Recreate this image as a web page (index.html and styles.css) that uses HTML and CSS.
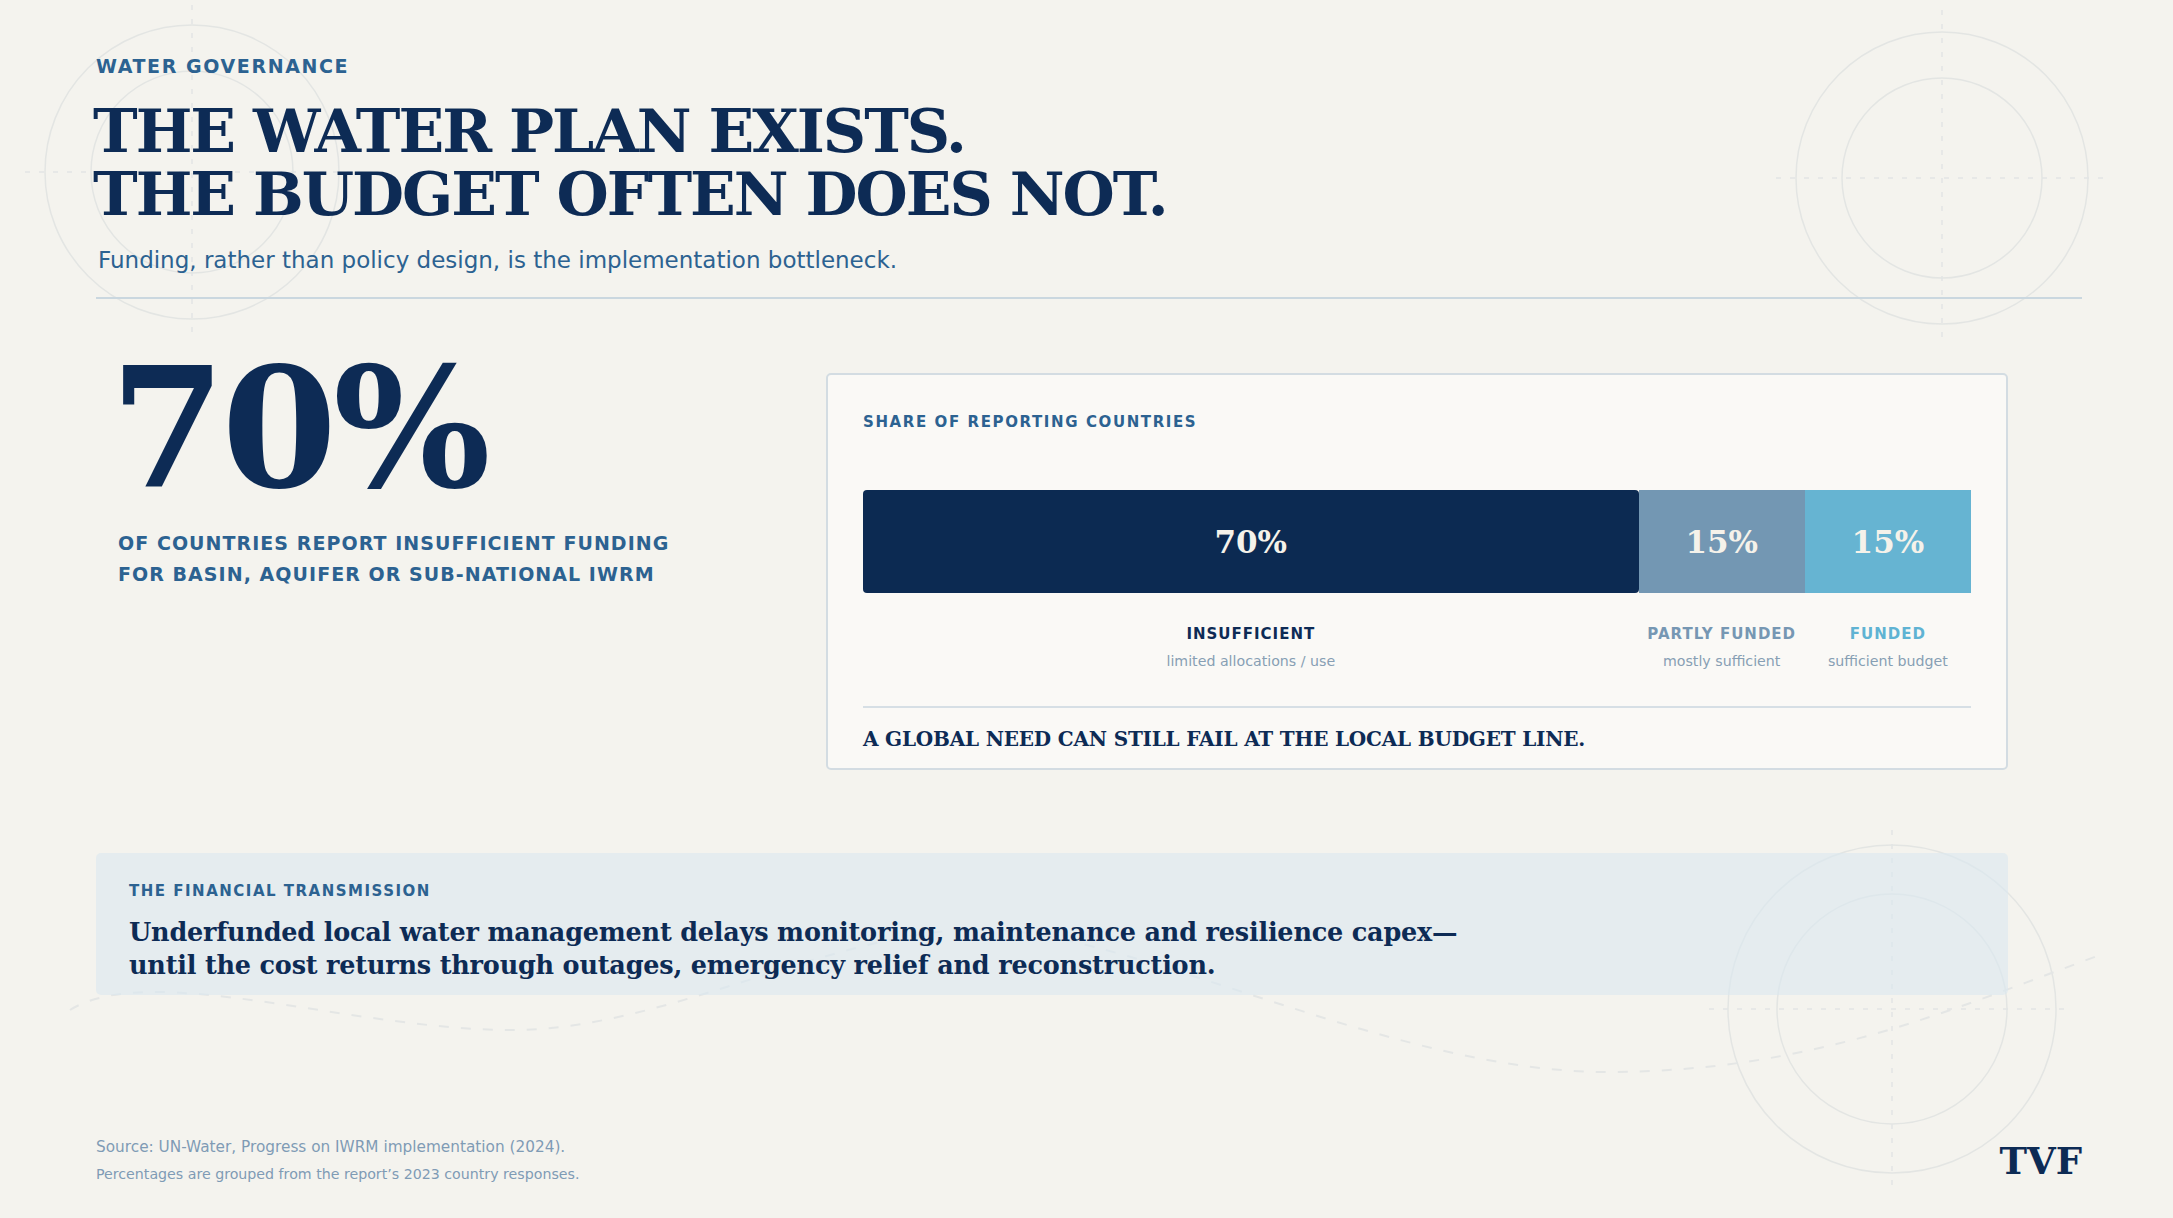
FILE: index.html
```html
<!DOCTYPE html>
<html lang="en">
<head>
<meta charset="utf-8">
<title>Water Governance</title>
<link rel="stylesheet" href="styles.css">
</head>
<body>
<div class="page">
  <svg class="deco" width="2173" height="1218" viewBox="0 0 2173 1218" aria-hidden="true">
    <g fill="none" stroke="#e3e5e3" stroke-width="1.5">
      <circle cx="192" cy="172" r="147"/>
      <circle cx="192" cy="172" r="101"/>
      <circle cx="1942" cy="178" r="146"/>
      <circle cx="1942" cy="178" r="100"/>
      <circle cx="1892" cy="1009" r="164"/>
      <circle cx="1892" cy="1009" r="115"/>
    </g>
    <g stroke="#e2e5e5" stroke-width="1.5" stroke-dasharray="5 9">
      <line x1="25" y1="172" x2="360" y2="172"/>
      <line x1="192" y1="5" x2="192" y2="340"/>
      <line x1="1776" y1="178" x2="2107" y2="178"/>
      <line x1="1942" y1="10" x2="1942" y2="345"/>
      <line x1="1709" y1="1009" x2="2070" y2="1009"/>
      <line x1="1892" y1="830" x2="1892" y2="1190"/>
    </g>
    <path d="M70,1010 C150,960 350,1030 512,1030 S850,920 1000,930 S1400,1072 1606,1072 S1950,1010 2100,955" fill="none" stroke="#e4e6e5" stroke-width="2" stroke-dasharray="10 12"/>
  </svg>

  <header class="head">
    <div class="eyebrow">WATER GOVERNANCE</div>
    <h1 class="title"><span class="title-line">THE WATER PLAN EXISTS.</span><span class="title-line">THE BUDGET OFTEN DOES NOT.</span></h1>
    <p class="subtitle">Funding, rather than policy design, is the implementation bottleneck.</p>
  </header>

  <div class="rule"></div>

  <section class="main">
    <div class="stat">
      <div class="stat-num">70%</div>
      <p class="stat-cap">OF COUNTRIES REPORT INSUFFICIENT FUNDING<br>FOR BASIN, AQUIFER OR SUB-NATIONAL IWRM</p>
    </div>

    <div class="card">
      <div class="card-label">SHARE OF REPORTING COUNTRIES</div>
      <div class="bar">
        <div class="seg seg-insuf" style="flex-basis:70%">70%</div>
        <div class="seg seg-partly" style="flex-basis:15%">15%</div>
        <div class="seg seg-funded" style="flex-basis:15%">15%</div>
      </div>
      <div class="legend">
        <div class="leg" style="flex-basis:70%">
          <div class="leg-title leg-insuf">INSUFFICIENT</div>
          <div class="leg-sub">limited allocations / use</div>
        </div>
        <div class="leg" style="flex-basis:15%">
          <div class="leg-title leg-partly">PARTLY FUNDED</div>
          <div class="leg-sub">mostly sufficient</div>
        </div>
        <div class="leg" style="flex-basis:15%">
          <div class="leg-title leg-funded">FUNDED</div>
          <div class="leg-sub">sufficient budget</div>
        </div>
      </div>
      <div class="card-rule"></div>
      <p class="card-note">A GLOBAL NEED CAN STILL FAIL AT THE LOCAL BUDGET LINE.</p>
    </div>
  </section>

  <section class="transmission">
    <div class="trans-label">THE FINANCIAL TRANSMISSION</div>
    <p class="trans-text">Underfunded local water management delays monitoring, maintenance and resilience capex—<br>until the cost returns through outages, emergency relief and reconstruction.</p>
  </section>

  <footer class="foot">
    <div class="sources">
      <p class="source">Source: UN-Water, Progress on IWRM implementation (2024).</p>
      <p class="note">Percentages are grouped from the report’s 2023 country responses.</p>
    </div>
    <div class="logo">TVF</div>
  </footer>
</div>
</body>
</html>
```

FILE: styles.css
```css
* { box-sizing: border-box; }

html, body {
  margin: 0;
  padding: 0;
  background: #f4f3ee;
}

.page {
  position: relative;
  width: 2173px;
  height: 1218px;
  overflow: hidden;
  display: flex;
  flex-direction: column;
  padding: 54px 91px 34px 96px;
  font-family: "DejaVu Sans", "Noto Sans", sans-serif;
  color: #0d2b55;
}

.deco {
  position: absolute;
  left: 0;
  top: 0;
  z-index: 0;
  pointer-events: none;
}

.head, .rule, .main, .transmission, .foot {
  position: relative;
  z-index: 1;
}

.eyebrow {
  font-size: 19px;
  line-height: 24px;
  font-weight: bold;
  letter-spacing: 1.6px;
  color: #2c6291;
}

.title {
  margin: 22px 0 0 -3px;
  font-family: "DejaVu Serif", "Liberation Serif", serif;
  font-size: 60px;
  font-weight: bold;
  letter-spacing: -2px;
  color: #0d2b55;
}

.title-line {
  display: block;
  height: 63px;
  line-height: 63px;
}

.subtitle {
  margin: 20px 0 0 2px;
  font-size: 23px;
  line-height: 28px;
  color: #2c6291;
}

.rule {
  margin-top: 23px;
  height: 2px;
  background: #cad7df;
}

.main {
  display: flex;
  align-items: flex-start;
  margin-top: 47px;
  margin-right: 74px;
}

.stat {
  width: 730px;
  flex: none;
  padding-left: 22px;
}

.stat-num {
  font-family: "DejaVu Serif", "Liberation Serif", serif;
  font-size: 166px;
  line-height: 166px;
  font-weight: bold;
  letter-spacing: -4px;
  margin-left: -8px;
  color: #0d2b55;
}

.stat-cap {
  margin: 16px 0 0 0;
  font-size: 19px;
  line-height: 31px;
  font-weight: bold;
  letter-spacing: 1.05px;
  color: #2c6291;
}

.card {
  flex: 1;
  margin-top: 27px;
  background: #faf9f6;
  border: 2px solid #d3dce2;
  border-radius: 5px;
  padding: 37px 35px 16px 35px;
}

.card-label {
  font-size: 15px;
  line-height: 20px;
  font-weight: bold;
  letter-spacing: 1.6px;
  color: #2c6291;
}

.bar {
  display: flex;
  height: 103px;
  margin-top: 58px;
}

.seg {
  display: flex;
  align-items: center;
  justify-content: center;
  font-family: "DejaVu Serif", "Liberation Serif", serif;
  font-size: 31px;
  font-weight: bold;
  color: #f5f2ea;
}

.seg-insuf {
  background: #0c2a52;
  border-radius: 4px;
}

.seg-partly { background: #7397b3; }
.seg-funded { background: #66b4d2; }

.legend {
  display: flex;
  margin-top: 31px;
}

.leg {
  text-align: center;
}

.leg-title {
  font-size: 15px;
  line-height: 20px;
  font-weight: bold;
  letter-spacing: 1px;
}

.leg-insuf { color: #0d2b55; }
.leg-partly { color: #7697b3; }
.leg-funded { color: #5fb3d3; }

.leg-sub {
  margin-top: 7px;
  font-size: 14.2px;
  line-height: 20px;
  color: #879fb4;
}

.card-rule {
  margin-top: 35px;
  height: 2px;
  background: #d6dfe5;
}

.card-note {
  margin: 18px 0 0 0;
  font-family: "DejaVu Serif", "Liberation Serif", serif;
  font-size: 20px;
  line-height: 26px;
  font-weight: bold;
  letter-spacing: -0.2px;
  color: #0d2b55;
}

.transmission {
  margin-top: 83px;
  margin-right: 74px;
  background: rgba(219, 231, 240, 0.6);
  border-radius: 5px;
  padding: 28px 33px 13px 33px;
}

.trans-label {
  font-size: 15px;
  line-height: 20px;
  font-weight: bold;
  letter-spacing: 1.5px;
  color: #2c6291;
}

.trans-text {
  margin: 15px 0 0 0;
  font-family: "DejaVu Serif", "Liberation Serif", serif;
  font-size: 25.5px;
  line-height: 33px;
  font-weight: bold;
  letter-spacing: -0.2px;
  color: #0d2b55;
}

.foot {
  margin-top: auto;
  display: flex;
  justify-content: space-between;
  align-items: flex-end;
}

.source {
  margin: 0;
  font-size: 15.3px;
  line-height: 20px;
  color: #7f9bb5;
}

.note {
  margin: 7px 0 0 0;
  font-size: 14.2px;
  line-height: 20px;
  color: #7f9bb5;
}

.logo {
  font-family: "DejaVu Serif", "Liberation Serif", serif;
  font-size: 37px;
  line-height: 37px;
  font-weight: bold;
  color: #0d2b55;
  margin-bottom: 4px;
}
```
